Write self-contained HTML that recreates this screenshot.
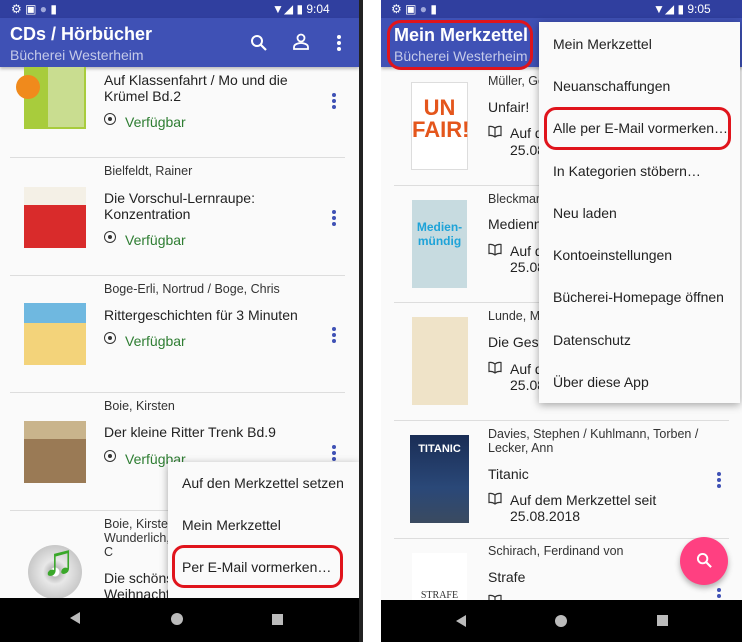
<!DOCTYPE html>
<html><head><meta charset="utf-8"><style>
*{margin:0;padding:0;box-sizing:border-box}
body{width:746px;height:642px;background:#fff;position:relative;overflow:hidden;font-family:"Liberation Sans",sans-serif;color:#212121}
.ph{position:absolute;top:0;height:642px;background:#fafafa;overflow:hidden}
.a{position:absolute;white-space:nowrap}
.sb{position:absolute;left:0;right:0;top:0;height:18px;background:#303f9f}
.tb{position:absolute;left:0;right:0;top:18px;height:49px;background:#3f51b5;box-shadow:0 2px 3px rgba(0,0,0,.25)}
.nav{position:absolute;left:0;right:0;bottom:0;height:43px;background:#000}
.t1{font-size:18px;font-weight:bold;color:#fff}
.t2{font-size:14px;color:#c5cae9}
.sep{position:absolute;height:1px;background:#ddd}
.au{font-size:12.5px;color:#333}
.ti{font-size:14px;color:#222}
.gr{font-size:14px;color:#2e7d32}
.dots{position:absolute;width:4px}
.dots i{display:block;width:4px;height:4px;border-radius:2px;background:#3f51b5;margin-bottom:2px}
.menu{position:absolute;background:#fafafa;box-shadow:0 2px 8px rgba(0,0,0,.35)}
.mi{position:absolute;font-size:14px;color:#222;white-space:nowrap}
.cov{position:absolute}
.ring{position:absolute;border:3px solid #e0141c;border-radius:12px}
.ico{position:absolute;width:12px;height:12px;border:1.5px solid #333;border-radius:50%}
.ico:after{content:"";position:absolute;left:2.5px;top:2.5px;width:4px;height:4px;border-radius:50%;background:#333}
.bk{position:absolute}
</style></head><body>

<!-- LEFT PHONE -->
<div class="ph" style="left:0;width:359px">
<div class="sb"></div>
<div class="a" style="left:11px;top:2px;color:#fff;font-size:12px">⚙ ▣ <span style="color:#9fa8da">●</span> ▮</div>
<div class="a" style="left:272px;top:2px;color:#fff;font-size:12px">▼◢ ▮ 9:04</div>
<div class="tb"></div>
<div class="a t1" style="left:10px;top:24px">CDs / Hörbücher</div>
<div class="a t2" style="left:10px;top:47px">Bücherei Westerheim</div>
<svg class="a" style="left:250px;top:34px" width="18" height="18" viewBox="0 0 18 18"><circle cx="7" cy="7" r="5" fill="none" stroke="#fff" stroke-width="2"/><path d="M11 11l5 5" stroke="#fff" stroke-width="2.2"/></svg>
<svg class="a" style="left:292px;top:33px" width="18" height="18" viewBox="0 0 18 18"><circle cx="9" cy="5" r="3.5" fill="none" stroke="#fff" stroke-width="1.8"/><path d="M2 16v-2c0-3 5-4 7-4s7 1 7 4v2z" fill="none" stroke="#fff" stroke-width="1.8"/></svg>
<div class="a" style="left:337px;top:35px"><div class="dots"><i style="background:#fff"></i><i style="background:#fff"></i><i style="background:#fff"></i></div></div>

<div class="cov" style="left:24px;top:67px;width:62px;height:62px;background:#a8cc3c"><div style="position:absolute;left:-8px;top:8px;width:24px;height:24px;border-radius:50%;background:#f08a1c"></div><div style="position:absolute;left:24px;top:0;width:36px;height:60px;background:#dfe8c8;opacity:.6"></div></div>
<div class="a ti" style="left:104px;top:72px">Auf Klassenfahrt / Mo und die</div>
<div class="a ti" style="left:104px;top:88px">Krümel Bd.2</div>
<div class="ico" style="left:104px;top:113px"></div><div class="a gr" style="left:125px;top:114px">Verfügbar</div>
<div class="dots" style="left:332px;top:93px"><i></i><i></i><i></i></div>
<div class="sep" style="left:10px;top:157px;width:335px"></div>

<div class="a au" style="left:104px;top:164px">Bielfeldt, Rainer</div>
<div class="cov" style="left:24px;top:187px;width:62px;height:61px;background:#d92b2b"><div style="height:18px;background:#f4f0e6"></div></div>
<div class="a ti" style="left:104px;top:190px">Die Vorschul-Lernraupe:</div>
<div class="a ti" style="left:104px;top:206px">Konzentration</div>
<div class="ico" style="left:104px;top:231px"></div><div class="a gr" style="left:125px;top:232px">Verfügbar</div>
<div class="dots" style="left:332px;top:210px"><i></i><i></i><i></i></div>
<div class="sep" style="left:10px;top:275px;width:335px"></div>

<div class="a au" style="left:104px;top:282px">Boge-Erli, Nortrud / Boge, Chris</div>
<div class="cov" style="left:24px;top:303px;width:62px;height:62px;background:#f3d37a"><div style="height:20px;background:#6fb8e0"></div></div>
<div class="a ti" style="left:104px;top:307px">Rittergeschichten für 3 Minuten</div>
<div class="ico" style="left:104px;top:332px"></div><div class="a gr" style="left:125px;top:333px">Verfügbar</div>
<div class="dots" style="left:332px;top:327px"><i></i><i></i><i></i></div>
<div class="sep" style="left:10px;top:392px;width:335px"></div>

<div class="a au" style="left:104px;top:399px">Boie, Kirsten</div>
<div class="cov" style="left:24px;top:421px;width:62px;height:62px;background:#9a7a55"><div style="height:18px;background:#c9b48c"></div></div>
<div class="a ti" style="left:104px;top:424px">Der kleine Ritter Trenk Bd.9</div>
<div class="ico" style="left:104px;top:450px"></div><div class="a gr" style="left:125px;top:451px">Verfügbar</div>
<div class="dots" style="left:332px;top:445px"><i></i><i></i><i></i></div>
<div class="sep" style="left:10px;top:510px;width:335px"></div>

<div class="a au" style="left:104px;top:517px">Boie, Kirsten</div>
<div class="a au" style="left:104px;top:531px">Wunderlich,</div>
<div class="a au" style="left:104px;top:545px">C</div>
<div class="cov" style="left:28px;top:545px;width:54px;height:54px;border-radius:50%;background:radial-gradient(circle,#fff 0 4px,#bbb 5px,#e8e8e8 12px,#c8c8c8 27px)"></div>
<div class="a" style="left:42px;top:536px;font-size:44px;color:#3aa82a;font-weight:bold">♫</div>
<div class="a ti" style="left:104px;top:570px">Die schönsten</div>
<div class="a ti" style="left:104px;top:586px">Weihnachtsgeschichten für die</div>

<div class="menu" style="left:168px;top:462px;width:191px;height:137px"></div>
<div class="mi" style="left:182px;top:475px">Auf den Merkzettel setzen</div>
<div class="mi" style="left:182px;top:517px">Mein Merkzettel</div>
<div class="mi" style="left:182px;top:559px">Per E-Mail vormerken…</div>
<div class="ring" style="left:172px;top:545px;width:171px;height:43px"></div>

<div class="nav" style="height:44px"></div>
<div class="a" style="left:70px;top:612px;width:0;height:0;border-top:6px solid transparent;border-bottom:6px solid transparent;border-right:10px solid #bbb"></div>
<div class="a" style="left:171px;top:613px;width:12px;height:12px;border-radius:50%;background:#bbb"></div>
<div class="a" style="left:272px;top:614px;width:11px;height:11px;background:#bbb"></div>
</div>
<div class="a" style="left:359px;top:0;width:4px;height:642px;background:#222"></div>

<!-- RIGHT PHONE -->
<div class="ph" style="left:381px;width:361px">
<div class="sb"></div>
<div class="a" style="left:10px;top:2px;color:#fff;font-size:12px">⚙ ▣ <span style="color:#9fa8da">●</span> ▮</div>
<div class="a" style="left:272px;top:2px;color:#fff;font-size:12px">▼◢ ▮ 9:05</div>
<div class="tb"></div>
<div class="a t1" style="left:13px;top:25px">Mein Merkzettel</div>
<div class="a t2" style="left:13px;top:48px">Bücherei Westerheim</div>
<div class="ring" style="left:6px;top:20px;width:146px;height:50px;border-radius:14px"></div>

<div class="cov" style="left:30px;top:82px;width:57px;height:88px;background:#fff;border:1px solid #ddd;text-align:center;font-weight:bold;color:#e4561c;font-size:22px;line-height:22px;padding-top:14px">UN<br>FAIR!</div>
<div class="a au" style="left:107px;top:74px">Müller, Ge</div>
<div class="a ti" style="left:107px;top:99px">Unfair!</div>
<svg class="bk" style="left:107px;top:125px" width="14" height="13" viewBox="0 0 14 13"><path d="M7 3C5 1.5 3 1.2 1 1.5v9c2-.3 4 0 6 1.5 2-1.5 4-1.8 6-1.5v-9C11 1.2 9 1.5 7 3zM7 3v9" fill="none" stroke="#333" stroke-width="1.2"/></svg>
<div class="a ti" style="left:129px;top:125px">Auf d</div><div class="a ti" style="left:129px;top:142px">25.08</div>
<div class="sep" style="left:13px;top:185px;width:335px"></div>

<div class="cov" style="left:31px;top:200px;width:55px;height:88px;background:#c7dbe0;color:#1ea3d8;font-weight:bold;font-size:12px;text-align:center;padding-top:20px">Medien-<br>mündig</div>
<div class="a au" style="left:107px;top:192px">Bleckmar</div>
<div class="a ti" style="left:107px;top:216px">Medienn</div>
<svg class="bk" style="left:107px;top:243px" width="14" height="13" viewBox="0 0 14 13"><path d="M7 3C5 1.5 3 1.2 1 1.5v9c2-.3 4 0 6 1.5 2-1.5 4-1.8 6-1.5v-9C11 1.2 9 1.5 7 3zM7 3v9" fill="none" stroke="#333" stroke-width="1.2"/></svg>
<div class="a ti" style="left:129px;top:243px">Auf d</div><div class="a ti" style="left:129px;top:259px">25.08</div>
<div class="sep" style="left:13px;top:302px;width:335px"></div>

<div class="cov" style="left:31px;top:317px;width:56px;height:88px;background:#efe3c8"></div>
<div class="a au" style="left:107px;top:309px">Lunde, M</div>
<div class="a ti" style="left:107px;top:334px">Die Gesc</div>
<svg class="bk" style="left:107px;top:361px" width="14" height="13" viewBox="0 0 14 13"><path d="M7 3C5 1.5 3 1.2 1 1.5v9c2-.3 4 0 6 1.5 2-1.5 4-1.8 6-1.5v-9C11 1.2 9 1.5 7 3zM7 3v9" fill="none" stroke="#333" stroke-width="1.2"/></svg>
<div class="a ti" style="left:129px;top:361px">Auf d</div><div class="a ti" style="left:129px;top:377px">25.08</div>
<div class="sep" style="left:13px;top:420px;width:335px"></div>

<div class="cov" style="left:29px;top:435px;width:59px;height:88px;background:linear-gradient(#1a2d55,#2a4878 60%,#3a4a60)"><div style="color:#fff;font-weight:bold;font-size:11px;text-align:center;margin-top:8px">TITANIC</div></div>
<div class="a au" style="left:107px;top:427px">Davies, Stephen / Kuhlmann, Torben /</div>
<div class="a au" style="left:107px;top:441px">Lecker, Ann</div>
<div class="a ti" style="left:107px;top:466px">Titanic</div>
<svg class="bk" style="left:107px;top:492px" width="14" height="13" viewBox="0 0 14 13"><path d="M7 3C5 1.5 3 1.2 1 1.5v9c2-.3 4 0 6 1.5 2-1.5 4-1.8 6-1.5v-9C11 1.2 9 1.5 7 3zM7 3v9" fill="none" stroke="#333" stroke-width="1.2"/></svg>
<div class="a ti" style="left:129px;top:492px">Auf dem Merkzettel seit</div><div class="a ti" style="left:129px;top:508px">25.08.2018</div>
<div class="dots" style="left:336px;top:472px"><i></i><i></i><i></i></div>
<div class="sep" style="left:13px;top:538px;width:335px"></div>

<div class="cov" style="left:31px;top:553px;width:55px;height:50px;background:#fff"><div style="position:absolute;bottom:2px;left:0;right:0;text-align:center;font-family:'Liberation Serif',serif;font-size:10px;color:#333">STRAFE</div></div>
<div class="a au" style="left:107px;top:544px">Schirach, Ferdinand von</div>
<div class="a ti" style="left:107px;top:569px">Strafe</div>
<svg class="bk" style="left:107px;top:594px" width="14" height="13" viewBox="0 0 14 13"><path d="M7 3C5 1.5 3 1.2 1 1.5v9c2-.3 4 0 6 1.5 2-1.5 4-1.8 6-1.5v-9C11 1.2 9 1.5 7 3zM7 3v9" fill="none" stroke="#333" stroke-width="1.2"/></svg>
<div class="dots" style="left:336px;top:588px"><i></i><i></i></div>
<div class="a" style="left:299px;top:537px;width:48px;height:48px;border-radius:50%;background:#ff4081;box-shadow:0 3px 6px rgba(0,0,0,.3)"></div>
<svg class="a" style="left:315px;top:552px" width="17" height="17" viewBox="0 0 18 18"><circle cx="7" cy="7" r="5" fill="none" stroke="#fff" stroke-width="2"/><path d="M11 11l5 5" stroke="#fff" stroke-width="2.2"/></svg>

<div class="menu" style="left:158px;top:22px;width:201px;height:381px"></div>
<div class="mi" style="left:172px;top:36px">Mein Merkzettel</div>
<div class="mi" style="left:172px;top:78px">Neuanschaffungen</div>
<div class="mi" style="left:172px;top:120px">Alle per E-Mail vormerken…</div>
<div class="mi" style="left:172px;top:163px">In Kategorien stöbern…</div>
<div class="mi" style="left:172px;top:205px">Neu laden</div>
<div class="mi" style="left:172px;top:247px">Kontoeinstellungen</div>
<div class="mi" style="left:172px;top:289px">Bücherei-Homepage öffnen</div>
<div class="mi" style="left:172px;top:332px">Datenschutz</div>
<div class="mi" style="left:172px;top:374px">Über diese App</div>
<div class="ring" style="left:163px;top:107px;width:187px;height:43px"></div>

<div class="nav" style="height:42px"></div>
<div class="a" style="left:75px;top:615px;width:0;height:0;border-top:6px solid transparent;border-bottom:6px solid transparent;border-right:10px solid #bbb"></div>
<div class="a" style="left:174px;top:615px;width:12px;height:12px;border-radius:50%;background:#bbb"></div>
<div class="a" style="left:276px;top:615px;width:11px;height:11px;background:#bbb"></div>
</div>
</body></html>
